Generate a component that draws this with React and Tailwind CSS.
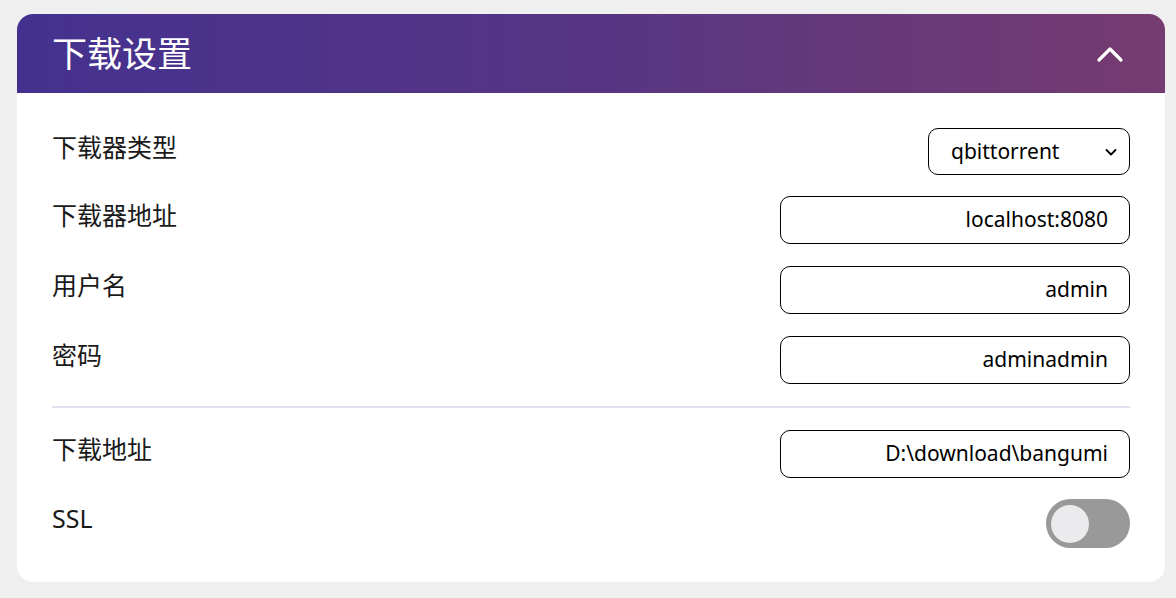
import React from "react";

const font = { fontFamily: '"Noto Sans", "Noto Sans CJK SC", sans-serif' };

function Field({ value }) {
  return (
    <div className="w-[350px] h-[48px] rounded-[10px] border border-black flex items-center justify-end pr-[21px] text-[21px] text-black">
      {value}
    </div>
  );
}

function Label({ children }) {
  return <div className="text-[25px] leading-[36px] text-[#1a1a1a] mt-[1px]">{children}</div>;
}

export default function App() {
  return (
    <div className="min-h-[598px] w-[1176px] bg-[#efefef] pt-[14px] px-[17px]" style={font}>
      <div className="w-[1148px] h-[568px] bg-white rounded-[16px] overflow-hidden flex flex-col">
        <div className="h-[79px] flex items-center justify-between pl-[35px] pr-[41px] bg-gradient-to-r from-[#44318f] via-[#573583] to-[#763b70]">
          <div className="text-white text-[35px] leading-none">下载设置</div>
          <svg width="28" height="18" viewBox="0 0 28 18" fill="none" stroke="white" strokeWidth="3.2" strokeLinecap="round" strokeLinejoin="round">
            <path d="M3 15 L14 4 L25 15" />
          </svg>
        </div>
        <div className="flex flex-col pl-[35px] pr-[35px] pt-[35px]">
          <div className="flex justify-between items-start h-[47px]">
            <Label>下载器类型</Label>
            <div className="w-[202px] h-[47px] rounded-[10px] border border-black flex items-center justify-between pl-[22px] pr-[11px] text-[21px] text-black">
              <span>qbittorrent</span>
              <svg width="14" height="10" viewBox="0 0 14 10" fill="none" stroke="black" strokeWidth="1.8" strokeLinecap="round" strokeLinejoin="round">
                <path d="M2.5 3 L7 7.5 L11.5 3" />
              </svg>
            </div>
          </div>
          <div className="flex justify-between items-start mt-[21px]">
            <Label>下载器地址</Label>
            <Field value="localhost:8080" />
          </div>
          <div className="flex justify-between items-start mt-[22px]">
            <Label>用户名</Label>
            <Field value="admin" />
          </div>
          <div className="flex justify-between items-start mt-[22px]">
            <Label>密码</Label>
            <Field value="adminadmin" />
          </div>
          <div className="h-[2px] bg-[#dfe1ef] mt-[22px]" />
          <div className="flex justify-between items-start mt-[22px]">
            <Label>下载地址</Label>
            <Field value="D:\download\bangumi" />
          </div>
          <div className="flex justify-between items-start mt-[21px]">
            <Label>SSL</Label>
            <div className="w-[84px] h-[49px] rounded-full bg-[#999999] flex items-center pl-[5px]">
              <div className="w-[38px] h-[38px] rounded-full bg-[#ebebee]" />
            </div>
          </div>
        </div>
      </div>
    </div>
  );
}
